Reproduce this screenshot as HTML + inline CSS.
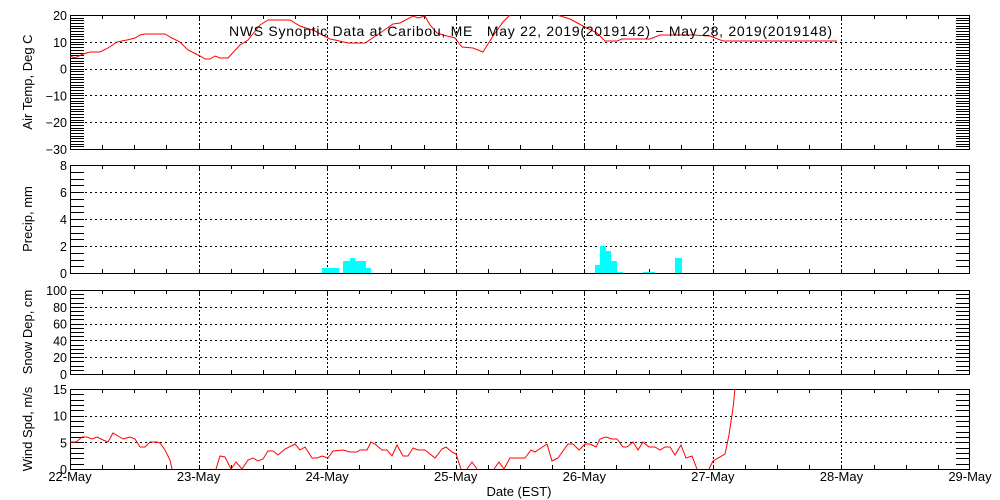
<!DOCTYPE html>
<html><head><meta charset="utf-8"><style>
html,body{margin:0;padding:0;background:#fff;width:1000px;height:500px;overflow:hidden}
svg text{font-family:"Liberation Sans",sans-serif;font-size:12.5px;fill:#000}
</style></head><body>
<svg id="s" width="1000" height="500" xmlns="http://www.w3.org/2000/svg" shape-rendering="crispEdges"></svg>
<script>
const S=document.getElementById('s');let h='';
const L=70,R=970,DW=900/7;
const panels=[
 {t:15,b:149,min:-30,max:20,major:10,minor:1,lab:'Air Temp, Deg C'},
 {t:165,b:273,min:0,max:8,major:2,minor:0.5,lab:'Precip, mm'},
 {t:290,b:374,min:0,max:100,major:20,minor:5,lab:'Snow Dep, cm'},
 {t:389,b:469,min:0,max:15,major:5,minor:1,lab:'Wind Spd, m/s'}];
panels.forEach(p=>{
 const Y=v=>p.b-(v-p.min)/(p.max-p.min)*(p.b-p.t);
 for(let i=1;i<7;i++){const x=Math.round(L+i*DW)+.5;h+=`<line x1="${x}" y1="${p.t}" x2="${x}" y2="${p.b}" stroke="#000" stroke-dasharray="2,2"/>`;}
 for(let v=p.min+p.major;v<p.max;v+=p.major){const y=Math.round(Y(v))+.5;h+=`<line x1="${L}" y1="${y}" x2="${R}" y2="${y}" stroke="#000" stroke-dasharray="2,3"/>`;}
 for(let v=p.min;v<=p.max+1e-6;v+=p.minor){const y=Math.round(Y(v))+.5;h+=`<line x1="${L}" y1="${y}" x2="${L+14}" y2="${y}" stroke="#000"/><line x1="${R-14}" y1="${y}" x2="${R}" y2="${y}" stroke="#000"/>`;}
 for(let v=p.min;v<=p.max;v+=p.major){h+=`<text x="${L-3}" y="${Y(v)+5}" text-anchor="end">${v<0?'−'+(-v):v}</text>`;}
 for(let i=1;i<28;i++){const x=Math.round(L+i*DW/4)+.5;h+=`<line x1="${x}" y1="${p.t}" x2="${x}" y2="${p.t+4}" stroke="#000"/><line x1="${x}" y1="${p.b-4}" x2="${x}" y2="${p.b}" stroke="#000"/>`;}
 h+=`<rect x="${L+.5}" y="${p.t+.5}" width="${R-L-1}" height="${p.b-p.t}" fill="none" stroke="#000" stroke-width="1.3"/>`;
 const cy=(p.t+p.b)/2;h+=`<text transform="translate(32,${cy}) rotate(-90)" text-anchor="middle" style="font-size:13px">${p.lab}</text>`;
});
[[322,339,268],[343,366,261],[350,355,258],[366,371,268],[595,600,265],[600,606,246],[606,611,251],[611,617,261],[617,623,272],[643,655,272],[675,682,258]].forEach(b=>{h+=`<rect x="${b[0]}" y="${b[2]}" width="${b[1]-b[0]}" height="${273-b[2]}" fill="#00ffff"/>`;});
const temp=[[70,56],[75,58],[83,54],[90,52],[100,52],[108,48],[117,42],[127,40],[135,38],[140,35],[145,34],[165,34],[172,38],[180,42],[188,50],[200,56],[205,59],[210,59],[215,56],[220,58],[228,58],[240,45],[248,40],[260,25],[268,20],[290,20],[300,26],[315,31],[330,39],[335,40],[348,43],[365,43],[380,33],[393,24],[400,23],[413,16],[418,18],[425,16],[430,25],[437,33],[447,36],[455,38],[462,47],[473,48],[483,52],[493,36],[503,22],[510,15]];
const temp2=[[557,15],[570,19],[583,26],[597,33],[605,41],[617,41],[622,39],[650,39],[660,35],[683,35],[693,35],[710,36],[723,41],[837,41]];
const wind1=[[70,442],[76,442],[82,437],[87,437],[92,439],[97,437],[103,440],[108,442],[113,433],[118,436],[123,439],[130,437],[135,439],[140,447],[145,447],[150,442],[157,442],[160,443],[165,450],[170,460],[172,469]];
const wind2=[[216,469],[220,456],[225,457],[231,469],[236,462],[242,469],[248,460],[253,458],[258,461],[263,459],[268,451],[273,451],[278,455],[285,449],[295,444],[300,450],[305,447],[312,458],[317,458],[322,456],[328,458],[333,451],[343,450],[350,452],[357,452],[360,450],[367,450],[371,442],[375,444],[382,450],[387,450],[392,456],[397,445],[403,456],[408,456],[413,448],[418,450],[425,450],[435,458],[442,449],[446,447],[452,452],[456,454],[461,469]];
const wind3=[[467,469],[472,462],[477,469]];
const wind4=[[494,469],[499,462],[504,469],[510,458],[525,458],[531,450],[535,452],[547,444],[552,461],[558,458],[568,444],[573,444],[579,450],[585,444],[590,444],[596,447],[600,439],[606,437],[612,439],[617,439],[623,447],[627,447],[633,442],[638,450],[643,442],[649,447],[655,447],[660,450],[665,447],[670,447],[675,455],[681,445],[686,458],[692,456],[697,469]];
const wind5=[[709,469],[713,461],[725,454],[729,435],[733,408],[735,389]];
[temp,temp2,wind1,wind2,wind3,wind4,wind5].forEach(a=>{h+=`<polyline points="${a.map(p=>p.join(',')).join(' ')}" fill="none" stroke="#ff0000" stroke-width="1" shape-rendering="auto"/>`;});
const days=['22-May','23-May','24-May','25-May','26-May','27-May','28-May','29-May'];
days.forEach((d,i)=>{h+=`<text x="${L+i*DW}" y="481" text-anchor="middle" style="font-size:13px">${d}</text>`;});
h+=`<text x="519" y="496" text-anchor="middle" style="font-size:13px">Date (EST)</text>`;
h+=`<text x="229" y="36" textLength="603" lengthAdjust="spacing" style="font-size:14px" xml:space="preserve">NWS Synoptic Data at Caribou, ME   May 22, 2019(2019142) − May 28, 2019(2019148)</text>`;
S.innerHTML=h;
</script>
</body></html>
